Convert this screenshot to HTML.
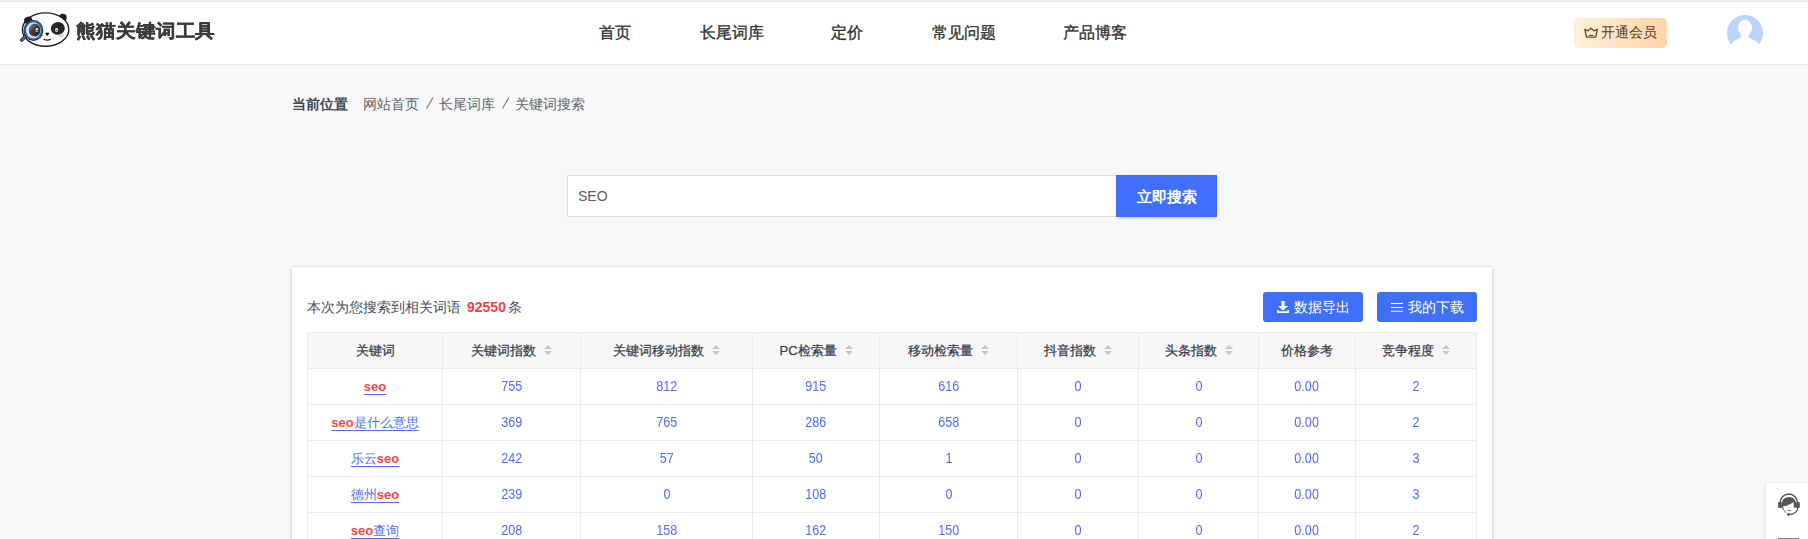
<!DOCTYPE html>
<html><head><meta charset="utf-8">
<style>
*{margin:0;padding:0;box-sizing:border-box}
html,body{width:1808px;height:539px;overflow:hidden}
body{background:#f8f8f8;font-family:"Liberation Sans",sans-serif;color:#333;position:relative}
.abs{position:absolute}
.topline{left:0;top:0;width:1808px;height:1px;background:#f4f4f4}
.header{left:0;top:1px;width:1808px;height:64px;background:#fff;border-top:1px solid #eaeaea;border-bottom:1px solid #e6e6e6}
.logo{left:20px;top:11px}
.logo-t{left:76px;top:18.5px;font-size:20px;font-weight:bold;color:#3a3a3a;line-height:26px;white-space:nowrap;transform:scaleY(.92);transform-origin:0 0;letter-spacing:-.1px;-webkit-text-stroke:.35px #3a3a3a}
.nav{top:23px;font-size:16px;font-weight:500;-webkit-text-stroke:.35px #333;color:#333;line-height:20px;white-space:nowrap}
.vip{left:1574px;top:18px;width:93px;height:30px;border-radius:5px;background:linear-gradient(90deg,#fff1d9,#fdd4a8);color:#5b3c1e;font-size:14px;line-height:29px;padding-left:27px;white-space:nowrap}
.crown{left:1584px;top:27px}
.avatar{left:1727px;top:15px}
.crumb{top:95px;font-size:14px;line-height:18px;white-space:nowrap}
.sinput{left:567px;top:175px;width:550px;height:42px;background:#fff;border:1px solid #dcdfe6;font-size:14px;color:#5a5e66;line-height:40px;padding-left:10px}
.sbtn{left:1116px;top:175px;width:101px;height:42px;background:#4070fb;color:#fff;font-size:15px;font-weight:bold;line-height:43px;text-align:center;box-shadow:0 2px 3px -1px rgba(0,0,0,.2),1px 0 2px rgba(0,0,0,.06)}
.card{left:292px;top:267px;width:1200px;height:300px;background:#fff;box-shadow:2px 0 3px -1px rgba(30,40,70,.16),-2px 0 3px -1px rgba(30,40,70,.16),0 -1px 2px rgba(0,0,0,.035)}
.cnt{left:307px;top:298px;font-size:14px;line-height:18px;color:#4a4f5e;white-space:nowrap}
.cnt b{color:#fe3f3f;margin:0 2px 0 6px}
.btn{top:292px;height:30px;width:100px;border-radius:3px;background:#4070fb;color:#fff;font-size:14px;line-height:30px;white-space:nowrap}
.btn svg{position:absolute}
table{position:absolute;left:307px;top:332px;border-collapse:collapse;table-layout:fixed}
td,th{border:1px solid #ebebeb;height:36px;text-align:center;font-size:13px;padding:0;white-space:nowrap}
th{background:#f7f7f7;font-weight:500;color:#383d4f;-webkit-text-stroke:.25px #383d4f}
th i{display:inline-block;width:8px;height:10px;margin-left:8px;vertical-align:0px;position:relative}
th i:before,th i:after{content:"";position:absolute;left:0;border-left:4px solid transparent;border-right:4px solid transparent}
th i:before{top:0;border-bottom:4px solid #c3c6cd}
th i:after{top:6px;border-top:4px solid #c3c6cd}
td{color:#4d6ef6}
td i.n{font-style:normal;display:inline-block;font-size:14px;transform:scaleX(.9);position:relative;top:-1px}
td a{color:#4d6ef6;text-decoration:underline;text-underline-offset:3px}
td a b{color:#fe4444}
.side{left:1766px;top:483px;width:50px;height:60px;background:#fff;box-shadow:-1px 0 3px rgba(0,0,0,.08)}
</style></head><body>
<div class="abs topline"></div>
<div class="abs header"></div>
<svg class="abs logo" width="52" height="38" viewBox="0 0 52 38">
  <defs><linearGradient id="pg" x1="0" y1="0" x2="1" y2="1"><stop offset="0" stop-color="#9a9a9a"/><stop offset=".45" stop-color="#3a3a3a"/><stop offset="1" stop-color="#262626"/></linearGradient></defs>
  <ellipse cx="42.8" cy="6.6" rx="3.9" ry="3.9" fill="#1f1f1f"/>
  <ellipse cx="25.6" cy="18.6" rx="23.2" ry="16.7" fill="#fff" stroke="#1f1f1f" stroke-width="1.4"/>
  <ellipse cx="37.8" cy="17.4" rx="7" ry="6.4" fill="#262626" transform="rotate(-12 37.8 17.4)"/>
  <ellipse cx="36.6" cy="19" rx="1.5" ry="2" fill="#fff"/>
  <ellipse cx="36.8" cy="19.3" rx="0.6" ry="0.9" fill="#333"/>
  <ellipse cx="40.8" cy="24.6" rx="3.2" ry="1.7" fill="#f6c3c8"/>
  <path d="M25.2 22 Q27.3 20.8 29.3 22 Q28.5 24.5 27.2 25 Q26 24.5 25.2 22Z" fill="#1f1f1f"/>
  <path d="M23.6 27.9 Q27.2 30.4 30.9 27.9" stroke="#1f1f1f" stroke-width="1.2" fill="none"/>
  <ellipse cx="8.2" cy="9.2" rx="4.2" ry="3.4" fill="#1f1f1f" transform="rotate(-25 8.2 9.2)"/>
  <path d="M5.2 25.5 L1.7 29.1" stroke="#1b1b1b" stroke-width="3.4" stroke-linecap="round"/>
  <path d="M5.2 25.5 L1.7 29.1" stroke="#2f7fd0" stroke-width="1.8" stroke-linecap="round"/>
  <ellipse cx="13.45" cy="19.4" rx="9.9" ry="10.5" fill="#222"/>
  <ellipse cx="13.45" cy="19.4" rx="9.2" ry="9.8" fill="#1d64bd"/>
  <ellipse cx="13.45" cy="19.4" rx="7.6" ry="8.2" fill="#5aa8e8"/>
  <ellipse cx="13.45" cy="19.4" rx="7.2" ry="7.8" fill="#ececec"/>
  <ellipse cx="14.6" cy="19.1" rx="5.9" ry="6.6" fill="url(#pg)"/>
  <ellipse cx="16.9" cy="19.1" rx="1.4" ry="2" fill="#f2f2f2"/>
  <circle cx="17.1" cy="19.6" r="0.8" fill="#222"/>
  <ellipse cx="12.5" cy="25.8" rx="2.5" ry="1" fill="#e8b4ba"/>
</svg>
<div class="abs logo-t">熊猫关键词工具</div>
<div class="abs nav" style="left:599px">首页</div>
<div class="abs nav" style="left:700px">长尾词库</div>
<div class="abs nav" style="left:831px">定价</div>
<div class="abs nav" style="left:932px">常见问题</div>
<div class="abs nav" style="left:1063px">产品博客</div>
<div class="abs vip">开通会员</div>
<svg class="abs crown" width="16" height="13" viewBox="0 0 16 13"><path d="M0.9 2.3 L4 3.8 L6.9 1.3 L9.9 3.8 L13.3 2.3 L11.7 10.1 L2.5 10.1 Z" fill="none" stroke="#6a4828" stroke-width="1.35" stroke-linejoin="round"/><path d="M4.6 8.4 H9.4" stroke="#6a4828" stroke-width="1.1"/></svg>
<svg class="abs avatar" width="36" height="36" viewBox="0 0 36 36">
  <defs><mask id="am"><rect x="0" y="0" width="36" height="36" fill="#fff"/>
   <g fill="#000"><ellipse cx="18" cy="12.6" rx="7" ry="7.9"/>
   <path d="M12.5 16 L23.5 16 L21.4 22.1 Q24.5 24 28.4 25.8 Q30.5 27.2 31.7 29.2 L40 40 L-4 40 L4.3 29.2 Q5.5 27.2 7.6 25.8 Q11.5 24 14.6 22.1 Z"/></g></mask></defs>
  <circle cx="18" cy="18" r="18" fill="#b9d5fd" mask="url(#am)"/>
</svg>
<div class="abs crumb" style="left:292px;top:95px;font-weight:bold;color:#404656">当前位置</div>
<div class="abs crumb" style="left:363px;top:95px;color:#62666f">网站首页</div>
<svg class="abs" style="left:425px;top:96px" width="10" height="14"><path d="M1.5 12.5 L8 1.5" stroke="#777" stroke-width="1.1"/></svg>
<div class="abs crumb" style="left:439px;top:95px;color:#62666f">长尾词库</div>
<svg class="abs" style="left:501px;top:96px" width="10" height="14"><path d="M1.5 12.5 L8 1.5" stroke="#777" stroke-width="1.1"/></svg>
<div class="abs crumb" style="left:515px;top:95px;color:#62666f">关键词搜索</div>
<div class="abs sinput">SEO</div>
<div class="abs sbtn">立即搜索</div>
<div class="abs card"></div>
<div class="abs cnt">本次为您搜索到相关词语<b>92550</b>条</div>
<div class="abs btn" style="left:1263px;padding-left:31px"><svg width="12" height="12" viewBox="0 0 12 12" style="left:14px;top:9px"><path d="M4.4 0 H7.6 V4.9 H11 L6 9.6 L1 4.9 H4.4Z M0 9 H1.6 V10.3 H10.4 V9 H12 V12 H0Z" fill="#fff"/></svg>数据导出</div>
<div class="abs btn" style="left:1377px;padding-left:31px"><svg width="13" height="9" viewBox="0 0 13 9" style="left:14px;top:11px"><path d="M0 0.5 H12 M0 4.5 H12 M0 8.3 H12" stroke="#fff" stroke-width="1.1"/></svg>我的下载</div>
<table>
<colgroup><col style="width:135px"><col style="width:138px"><col style="width:172px"><col style="width:127px"><col style="width:138px"><col style="width:121px"><col style="width:120px"><col style="width:97px"><col style="width:121px"></colgroup>
<tr><th>关键词</th><th>关键词指数<i></i></th><th>关键词移动指数<i></i></th><th>PC检索量<i></i></th><th>移动检索量<i></i></th><th>抖音指数<i></i></th><th>头条指数<i></i></th><th>价格参考</th><th>竞争程度<i></i></th></tr>
<tr><td><a><b>seo</b></a></td><td><i class="n">755</i></td><td><i class="n">812</i></td><td><i class="n">915</i></td><td><i class="n">616</i></td><td><i class="n">0</i></td><td><i class="n">0</i></td><td><i class="n">0.00</i></td><td><i class="n">2</i></td></tr>
<tr><td><a><b>seo</b>是什么意思</a></td><td><i class="n">369</i></td><td><i class="n">765</i></td><td><i class="n">286</i></td><td><i class="n">658</i></td><td><i class="n">0</i></td><td><i class="n">0</i></td><td><i class="n">0.00</i></td><td><i class="n">2</i></td></tr>
<tr><td><a>乐云<b>seo</b></a></td><td><i class="n">242</i></td><td><i class="n">57</i></td><td><i class="n">50</i></td><td><i class="n">1</i></td><td><i class="n">0</i></td><td><i class="n">0</i></td><td><i class="n">0.00</i></td><td><i class="n">3</i></td></tr>
<tr><td><a>德州<b>seo</b></a></td><td><i class="n">239</i></td><td><i class="n">0</i></td><td><i class="n">108</i></td><td><i class="n">0</i></td><td><i class="n">0</i></td><td><i class="n">0</i></td><td><i class="n">0.00</i></td><td><i class="n">3</i></td></tr>
<tr><td><a><b>seo</b>查询</a></td><td><i class="n">208</i></td><td><i class="n">158</i></td><td><i class="n">162</i></td><td><i class="n">150</i></td><td><i class="n">0</i></td><td><i class="n">0</i></td><td><i class="n">0.00</i></td><td><i class="n">2</i></td></tr>
</table>
<div class="abs side"></div>
<svg class="abs" style="left:1777px;top:493px" width="24" height="25" viewBox="0 0 24 25">
  <path d="M3.3 9.5 A8.5 8.5 0 0 1 20.3 9.5" fill="none" stroke="#555" stroke-width="1.5"/>
  <path d="M4.4 14 Q4.2 4 11.8 4 Q19.4 4 19.3 13 L19.3 15 L16.7 14.2 Q16.9 11 16.4 9 Q12.5 12.6 6.3 13.3 L5 16 Z" fill="#555"/>
  <path d="M5.3 13 Q5.6 17.6 9.2 19.6" fill="none" stroke="#555" stroke-width="1"/>
  <rect x="1.1" y="9" width="3.6" height="6.1" rx="1" fill="#555"/>
  <rect x="19.1" y="9" width="3.7" height="6.1" rx="1" fill="#555"/>
  <path d="M20.8 14.8 Q20.2 20.8 12.4 21.6" fill="none" stroke="#555" stroke-width="1.2"/>
  <circle cx="11.5" cy="21.5" r="1.4" fill="#555"/>
  <path d="M9.9 17.3 Q12 18.3 14.1 17.3" stroke="#666" stroke-width="0.9" fill="none"/>
</svg>
<div class="abs" style="left:1778px;top:538px;width:21px;height:1px;background:#888"></div>
</body></html>
